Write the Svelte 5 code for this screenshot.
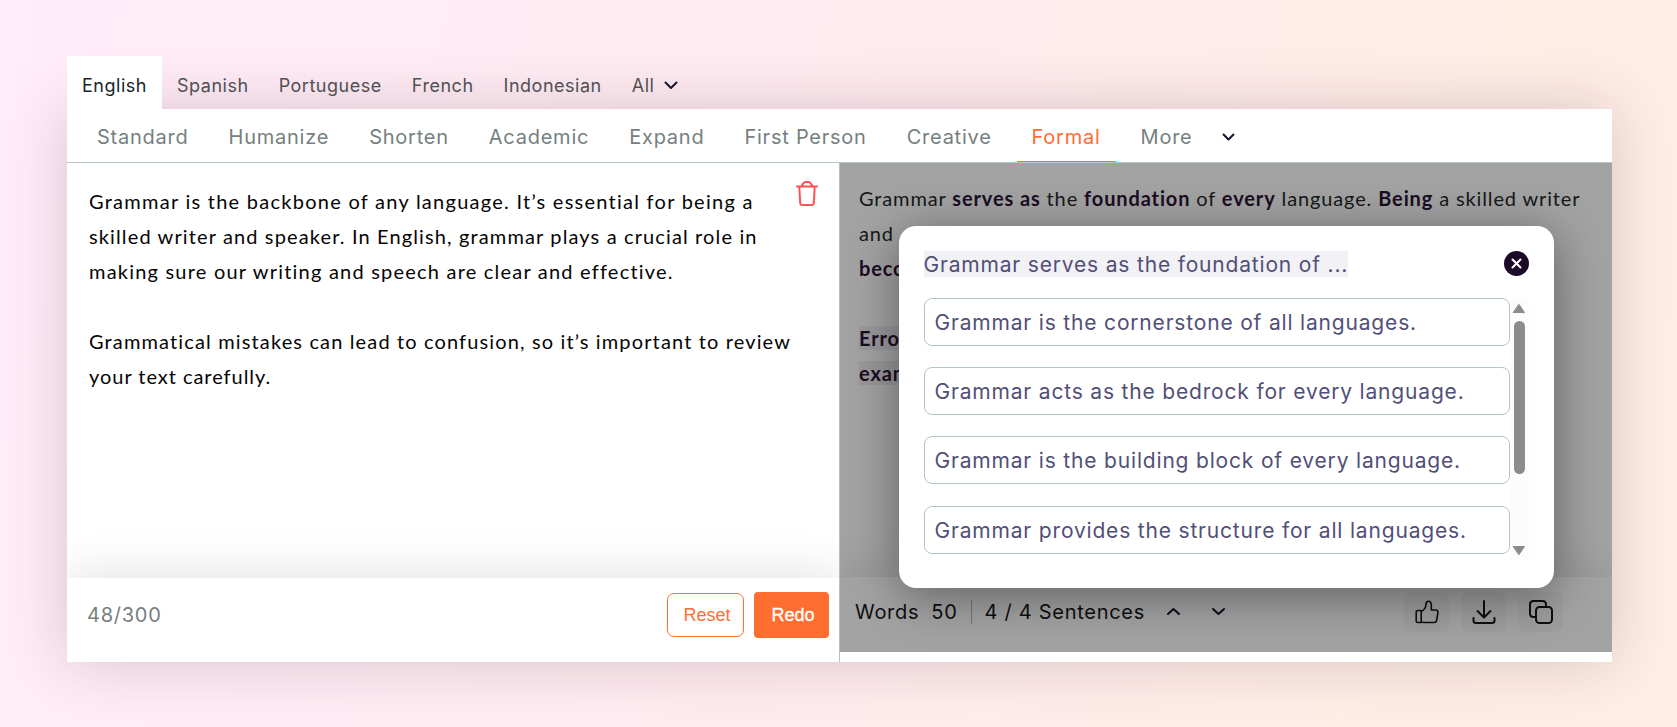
<script lang="ts">
  type Part = { text: string; bold?: boolean };

  const languages = ['English', 'Spanish', 'Portuguese', 'French', 'Indonesian'];
  const modes = ['Standard', 'Humanize', 'Shorten', 'Academic', 'Expand', 'First Person', 'Creative', 'Formal'];

  // tracking keeps every line at its own measure
  const sourceLines = [
    { text: 'Grammar is the backbone of any language. It’s essential for being a', tracking: 1.26 },
    { text: 'skilled writer and speaker. In English, grammar plays a crucial role in', tracking: 1.13 },
    { text: 'making sure our writing and speech are clear and effective.', tracking: 1.21 },
    { text: '', tracking: 0 },
    { text: 'Grammatical mistakes can lead to confusion, so it’s important to review', tracking: 1.14 },
    { text: 'your text carefully.', tracking: 0.96 }
  ];

  const resultParts: Part[] = [
    { text: 'Grammar ' },
    { text: 'serves as', bold: true },
    { text: ' the ' },
    { text: 'foundation', bold: true },
    { text: ' of ' },
    { text: 'every', bold: true },
    { text: ' language. ' },
    { text: 'Being', bold: true },
    { text: ' a skilled writer' }
  ];

  const suggestions = [
    'Grammar is the cornerstone of all languages.',
    'Grammar acts as the bedrock for every language.',
    'Grammar is the building block of every language.',
    'Grammar provides the structure for all languages.'
  ];

  let language = $state('English');
  let mode = $state('Formal');
  let open = $state(true);
</script>

<div class="page">
  <nav class="languages">
    {#each languages as item}
      <button class="language" class:active={item === language} onclick={() => (language = item)}>{item}</button>
    {/each}
    <button class="language all">
      All
      <svg width="14" height="9" viewBox="0 0 14 9"><path d="M1.5 1.5 7 7l5.500-5.500" /></svg>
    </button>
  </nav>

  <div class="tool">
    <nav class="modes">
      {#each modes as item}
        <button class="mode" class:active={item === mode} onclick={() => (mode = item)}>{item}</button>
      {/each}
      <button class="mode more">
        More
        <svg width="13" height="9" viewBox="0 0 13 9"><path d="M1.500 1.500l5 5 5-5" /></svg>
      </button>
    </nav>

    <div class="panes">
      <section class="pane source">
        <div class="editor">
          <div class="copy">
            {#each sourceLines as line}
              <p style="letter-spacing: {line.tracking}px">{line.text}</p>
            {/each}
          </div>
          <button class="trash" aria-label="Clear text">
            <svg width="22" height="25" viewBox="0 0 22 25">
              <path d="M1 5.500h20M5.500 5 7.500 2.200Q8.300 1 9.500 1h3q1.200 0 2 1.200L16.500 5M3.300 6l.9 16q.1 2 2 2h9.600q1.900 0 2-2l.9-16" />
            </svg>
          </button>
        </div>
        <footer class="source-bar">
          <span class="count">48/300</span>
          <button class="reset">Reset</button>
          <button class="redo">Redo</button>
        </footer>
      </section>

      <section class="pane result">
        <div class="result-text">
          <p>{#each resultParts as part}{#if part.bold}<b>{part.text}</b>{:else}{part.text}{/if}{/each}</p>
          <p>and</p>
          <p><b>beco</b></p>
          <p></p>
          <p><b class="mark">Error</b></p>
          <p><b class="mark">exam</b></p>
        </div>
        <footer class="result-bar">
          <span>Words</span>
          <span class="words">50</span>
          <i class="divider"></i>
          <span class="sentences">4 / 4 Sentences</span>
          <svg class="step" width="15" height="9" viewBox="0 0 15 9"><path d="M2 7l5.500-5L13 7" /></svg>
          <svg class="step" width="15" height="9" viewBox="0 0 15 9"><path d="M2 2l5.500 5L13 2" /></svg>
          <div class="actions">
            <button aria-label="Like">
              <svg width="24" height="24" viewBox="0 0 24 24" class="thin">
                <path d="M1.200 12q0-1.500 1.500-1.500h3.500v12H2.700q-1.500 0-1.500-1.500zM6.200 11.500c3-1.500 4.600-3.500 4.800-7 0-2 .8-3.300 2.300-3.300 2.400 0 3 2 3 4V10h4.500q2.500.2 2.100 2.700l-1.300 7.800q-.4 2-2.400 2H9q-1.800 0-2.800-.8" />
              </svg>
            </button>
            <button aria-label="Download">
              <svg width="24" height="24" viewBox="0 0 24 24">
                <path d="M12 1v16M5.500 11l6.500 6.500 6.500-6.500M1.500 18v2.500q0 2.500 2.500 2.500h16q2.500 0 2.500-2.500V18" />
              </svg>
            </button>
            <button aria-label="Copy">
              <svg width="24" height="24" viewBox="0 0 24 24">
                <rect x="7" y="7" width="16" height="16" rx="3.500" />
                <path d="M6.500 17H4.500Q1 17 1 13.500v-9Q1 1 4.500 1h9Q17 1 17 4.500V6" />
              </svg>
            </button>
          </div>
        </footer>

        {#if open}
          <div class="shade">
            <div class="dialog">
              <header>
                <h2>Grammar serves as the foundation of ...</h2>
                <button class="close" aria-label="Close" onclick={() => (open = false)}>
                  <svg width="25" height="25" viewBox="0 0 25 25">
                    <circle cx="12.500" cy="12.500" r="12.500" />
                    <path d="M8.500 8.500l8 8M16.500 8.500l-8 8" />
                  </svg>
                </button>
              </header>
              <div class="options">
                <ul>
                  {#each suggestions as suggestion}
                    <li>{suggestion}</li>
                  {/each}
                </ul>
                <div class="track">
                  <svg width="14" height="11" viewBox="0 0 14 11"><path d="M7 1.500 12.500 9.500h-11z" /></svg>
                  <div class="thumb"></div>
                  <svg width="14" height="11" viewBox="0 0 14 11"><path d="M7 9.500 12.500 1.500h-11z" /></svg>
                </div>
              </div>
            </div>
          </div>
        {/if}
      </section>
    </div>
  </div>
</div>

<style>
  :global(body) {
    margin: 0;
  }

  .page {
    box-sizing: border-box;
    width: 1677px;
    height: 727px;
    padding: 56px 65px 65px 67px;
    overflow: hidden;
    background: linear-gradient(105deg, #ffecf9 0%, #ffebf0 45%, #ffede5 85%, #ffeee4 100%);
    font-family: Inter, 'Liberation Sans', sans-serif;
  }

  button {
    margin: 0;
    padding: 0;
    border: 0;
    background: none;
    font: inherit;
    color: inherit;
    cursor: pointer;
  }

  svg {
    display: block;
    flex: none;
    fill: none;
    stroke: #15152b;
    stroke-width: 2;
    stroke-linecap: round;
    stroke-linejoin: round;
  }

  p,
  h2,
  ul {
    margin: 0;
    padding: 0;
  }

  .languages {
    display: flex;
    height: 53px;
    position: relative;
    z-index: 1;
    font-size: 18px;
    letter-spacing: 0.52px;
    color: #4f5052;
  }

  .language {
    display: flex;
    align-items: center;
    padding: 5px 15px 0;
    letter-spacing: inherit;
  }

  .language.active {
    background: #fff;
    color: #17252a;
  }

  .all {
    gap: 10px;
  }

  .tool {
    background: #fff;
    box-shadow: 0 0 56px rgba(60, 20, 40, 0.19);
  }

  .modes {
    display: flex;
    gap: 10px;
    height: 53px;
    padding-left: 15px;
    border-bottom: 1px solid #b6c5c5;
    font-size: 20px;
    letter-spacing: 0.76px;
    color: #75807f;
  }

  .mode {
    display: flex;
    align-items: center;
    padding: 4px 15px 0;
    border-bottom: 1px solid transparent;
    letter-spacing: inherit;
  }

  .mode.active {
    color: #ff6e31;
    border-bottom-color: #ff6e31;
  }

  .more {
    gap: 29px;
  }

  .panes {
    display: flex;
    height: 499px;
  }

  .pane {
    position: relative;
    display: flex;
    flex-direction: column;
    overflow: hidden;
  }

  .source {
    width: 772px;
    border-right: 1px solid #b6c0c0;
  }

  .result {
    flex: 1;
  }

  .editor {
    display: flex;
    justify-content: space-between;
    box-sizing: border-box;
    height: 415px;
    padding: 21px 21px 0 22px;
  }

  .copy,
  .result-text {
    font-family: Lato, sans-serif;
    font-size: 20px;
    line-height: 35px;
  }

  .copy p,
  .result-text p {
    height: 35px;
    white-space: pre;
  }

  .copy {
    width: 705px;
    color: #050505;
  }

  .trash {
    align-self: flex-start;
    margin-top: -3px;
  }

  .trash svg {
    stroke: #ff5252;
  }

  .source-bar,
  .result-bar {
    display: flex;
    align-items: center;
    box-sizing: border-box;
    background: #fff;
    box-shadow: 0 0 50px rgba(20, 20, 60, 0.14);
  }

  .source-bar {
    height: 84px;
    padding: 0 10px 10px 20px;
  }

  .count {
    margin-right: auto;
    font-size: 20px;
    letter-spacing: 0.75px;
    color: #75807f;
  }

  .reset,
  .redo {
    box-sizing: border-box;
    font-family: 'Liberation Sans', Arial, sans-serif;
    font-size: 18px;
  }

  .reset {
    width: 77px;
    height: 44px;
    padding-left: 3px;
    border: 1px solid #ff6e31;
    border-radius: 7px;
    color: #ff6e31;
  }

  .redo {
    width: 75px;
    height: 46px;
    margin-left: 10px;
    padding-left: 3px;
    border-radius: 4px;
    background: #ff6e31;
    color: #fff;
    -webkit-text-stroke: 0.3px #fff;
  }

  .result-text {
    box-sizing: border-box;
    height: 414px;
    padding: 18px 19px 0;
    color: #262a2a;
    letter-spacing: 0.87px;
  }

  .result-text b {
    color: #2e1538;
  }

  .result-text .mark {
    background: #f0eff3;
  }

  .result-bar {
    height: 85px;
    padding: 0 49px 6px 15px;
    border-bottom: 10px solid #fff;
    font-size: 20px;
    letter-spacing: 0.72px;
    color: #15171a;
  }

  .words {
    margin-left: 12px;
  }

  .divider {
    width: 1px;
    height: 24px;
    margin: 0 13px;
    background: #b8b8b8;
  }

  .sentences {
    margin-right: 21px;
  }

  .step {
    margin-right: 30px;
  }

  .actions {
    display: flex;
    gap: 12px;
    margin-left: auto;
  }

  .actions button {
    display: flex;
    align-items: center;
    justify-content: center;
    width: 45px;
    height: 40px;
    border-radius: 8px;
    background: #f7f7f7;
  }

  .actions svg {
    stroke: #161616;
  }

  .actions .thin {
    stroke-width: 1.6;
  }

  /* dims the result pane behind the alternatives */
  .shade {
    position: absolute;
    inset: 0 0 10px;
    overflow: hidden;
    background: rgba(0, 0, 0, 0.36);
  }

  .dialog {
    box-sizing: border-box;
    width: 655px;
    height: 362px;
    margin: 63px 0 0 58.5px;
    padding: 25px 25px 0;
    border-radius: 17px;
    background: #fff;
    box-shadow: 0 8px 50px rgba(0, 0, 0, 0.42);
    color: #514f78;
    font-size: 21px;
    letter-spacing: 0.82px;
  }

  header {
    display: flex;
    justify-content: space-between;
    height: 47px;
  }

  h2 {
    height: 26px;
    background: #f2f1f5;
    font-size: inherit;
    font-weight: 400;
    line-height: 28px;
    white-space: nowrap;
  }

  .close {
    height: 25px;
  }

  .close circle {
    fill: #1c0a29;
    stroke: none;
  }

  .close path {
    stroke: #fff;
  }

  .options {
    display: flex;
    height: 262px;
  }

  ul {
    display: flex;
    flex: 1;
    flex-direction: column;
    gap: 21.2px;
    list-style: none;
  }

  li {
    box-sizing: border-box;
    height: 48px;
    padding-left: 10px;
    border: 1px solid #b6c5c5;
    border-radius: 8px;
    line-height: 47px;
    white-space: nowrap;
  }

  .track {
    display: flex;
    flex-direction: column;
    align-items: center;
    box-sizing: border-box;
    width: 19px;
    padding: 5px 0 4px;
    background: #fcfcfc;
  }

  .track svg {
    fill: #8b8b8b;
    stroke: #8b8b8b;
    stroke-width: 1;
  }

  .thumb {
    width: 11px;
    height: 153px;
    margin: 7px 0 auto;
    border-radius: 6px;
    background: #8b8b8b;
  }
</style>
